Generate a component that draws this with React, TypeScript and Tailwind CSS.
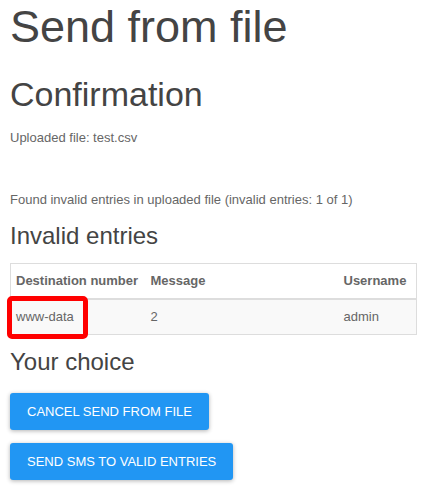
const rows = [{ dest: 'www-data', message: '2', user: 'admin' }]

export default function App() {
  return (
    <div className="min-h-[500px] bg-white pl-[10px] pr-[9px] pt-[2px] font-['Liberation_Sans',Arial,sans-serif] text-[13px] text-[#666]">
      <h1 className="text-[45px] leading-[50px] font-normal text-[#444]">Send from file</h1>
      <h2 className="mt-[24px] text-[34px] leading-[37px] font-normal text-[#444]">Confirmation</h2>
      <p className="mt-[13px] leading-[24px]">Uploaded file: test.csv</p>
      <p className="mt-[38px] leading-[24px]">
        Found invalid entries in uploaded file (invalid entries: 1 of 1)
      </p>

      <h3 className="mt-[11px] text-[24px] leading-[26px] font-normal text-[#444]">Invalid entries</h3>
      <div className="relative mt-[14px]">
        <table className="w-full table-fixed border-collapse border border-[#ddd]">
          <colgroup>
            <col className="w-[135px]" />
            <col className="w-[193px]" />
            <col />
          </colgroup>
          <thead>
            <tr className="border-b-2 border-[#ddd]">
              <th className="py-2 pl-[5px] text-left font-bold leading-[18px] whitespace-nowrap">Destination number</th>
              <th className="py-2 pl-[5px] text-left font-bold leading-[18px]">Message</th>
              <th className="py-2 pl-[5px] text-left font-bold leading-[18px]">Username</th>
            </tr>
          </thead>
          <tbody>
            {rows.map((r) => (
              <tr key={r.dest} className="border-b border-[#ddd] bg-[#f9f9f9]">
                <td className="py-2 pl-[5px] leading-[18px]">{r.dest}</td>
                <td className="py-2 pl-[5px] leading-[18px]">{r.message}</td>
                <td className="py-2 pl-[5px] leading-[18px]">{r.user}</td>
              </tr>
            ))}
          </tbody>
        </table>
        {/* annotation box over the first cell */}
        <span className="pointer-events-none absolute left-[-3px] top-[33px] h-[43px] w-[81px] rounded-[5px] border-[5px] border-[#ff0000]" />
      </div>

      <h3 className="mt-[14px] text-[24px] leading-[26px] font-normal text-[#444]">Your choice</h3>
      <div className="mt-[18px] flex flex-col items-start gap-[13px] pb-4">
        <button className="h-[37px] rounded-[3px] bg-[#2196f3] px-[17px] text-[13px] uppercase text-white shadow-[0_1px_4px_rgba(0,0,0,0.3)]">
          Cancel send from file
        </button>
        <button className="h-[37px] rounded-[3px] bg-[#2196f3] px-[17px] text-[13px] uppercase text-white shadow-[0_1px_4px_rgba(0,0,0,0.3)]">
          Send SMS to valid entries
        </button>
      </div>
    </div>
  )
}
